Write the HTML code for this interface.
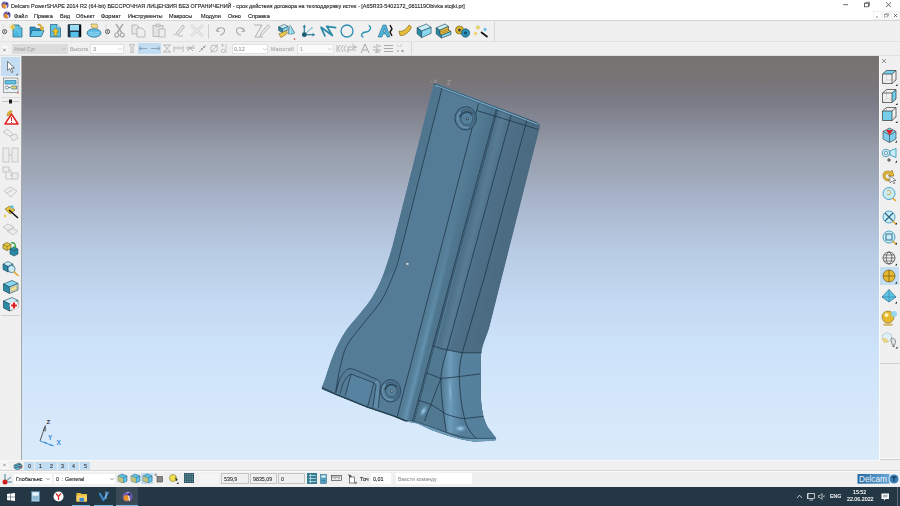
<!DOCTYPE html>
<html><head><meta charset="utf-8">
<style>
*{margin:0;padding:0;box-sizing:border-box}
html,body{width:900px;height:506px;overflow:hidden;background:#f0f0f0;font-family:"Liberation Sans",sans-serif;color:#000;position:relative}
.a{position:absolute}
.t{position:absolute;white-space:nowrap;line-height:1;-webkit-font-smoothing:antialiased;filter:grayscale(1);-webkit-text-stroke:0.12px currentColor}
#vp{background:linear-gradient(to bottom,#757270 0px,#767371 4px,#787576 24px,#7a7a86 44px,#878b97 69px,#979dab 94px,#9ea8b8 119px,#a8b4cb 144px,#b7cbe3 194px,#c4d9f1 244px,#cde3fa 294px,#d4e7fa 344px,#d9eafa 394px,#d9eafa 404px)}
</style></head><body>
<div class="a" style="left:0px;top:0px;width:900px;height:10px;background:#fff;"></div>
<svg class="a" style="left:1px;top:1px" width="8" height="8" viewBox="0 0 8 8"><circle cx="4" cy="4" r="3.6" fill="#6a5aa8"/><circle cx="3.3" cy="5" r="2.2" fill="#e8902a"/><path d="M4.5,0.8 L5.5,7.5" stroke="#fff" stroke-width="0.9"/><circle cx="5.2" cy="2.6" r="1.2" fill="#3b2f80"/></svg>
<div class="t" style="left:11px;top:3px;font-size:6.1px;color:#222;transform:scaleX(0.895);transform-origin:0 0;">Delcam PowerSHAPE 2014 R2 (64-bit) БЕССРОЧНАЯ ЛИЦЕНЗИЯ БЕЗ ОГРАНИЧЕНИЙ - срок действия договора на техподдержку истек - [A65R33-5402172_081119Obivka stojki.pr]</div>
<svg class="a" style="left:840px;top:0px" width="60" height="10" viewBox="0 0 60 10"><path d="M3,4.7 H8" stroke="#333" stroke-width="0.7"/><rect x="24.5" y="3.2" width="4" height="3.6" fill="none" stroke="#333" stroke-width="0.7"/><path d="M25.8,3.2 V2.3 H29.5 V5.7 H28.5" fill="none" stroke="#333" stroke-width="0.6"/><path d="M46,2.3 L51,7 M51,2.3 L46,7" stroke="#333" stroke-width="0.7"/></svg>
<div class="a" style="left:0px;top:10px;width:900px;height:10.5px;background:#fff;"></div>
<svg class="a" style="left:3px;top:11px" width="8" height="8" viewBox="0 0 8 8"><circle cx="4" cy="4" r="3.6" fill="#6a5aa8"/><circle cx="3.3" cy="5" r="2.2" fill="#e8902a"/><path d="M4.5,0.8 L5.5,7.5" stroke="#fff" stroke-width="0.9"/><circle cx="5.2" cy="2.6" r="1.2" fill="#3b2f80"/></svg>
<div class="t" style="left:14px;top:13.2px;font-size:6.1px;color:#1a1a1a;transform:scaleX(0.91);transform-origin:0 0;">Файл</div>
<div class="t" style="left:34px;top:13.2px;font-size:6.1px;color:#1a1a1a;transform:scaleX(0.91);transform-origin:0 0;">Правка</div>
<div class="t" style="left:60px;top:13.2px;font-size:6.1px;color:#1a1a1a;transform:scaleX(0.91);transform-origin:0 0;">Вид</div>
<div class="t" style="left:76px;top:13.2px;font-size:6.1px;color:#1a1a1a;transform:scaleX(0.91);transform-origin:0 0;">Объект</div>
<div class="t" style="left:101px;top:13.2px;font-size:6.1px;color:#1a1a1a;transform:scaleX(0.91);transform-origin:0 0;">Формат</div>
<div class="t" style="left:128px;top:13.2px;font-size:6.1px;color:#1a1a1a;transform:scaleX(0.91);transform-origin:0 0;">Инструменты</div>
<div class="t" style="left:169px;top:13.2px;font-size:6.1px;color:#1a1a1a;transform:scaleX(0.91);transform-origin:0 0;">Макросы</div>
<div class="t" style="left:201px;top:13.2px;font-size:6.1px;color:#1a1a1a;transform:scaleX(0.91);transform-origin:0 0;">Модули</div>
<div class="t" style="left:228px;top:13.2px;font-size:6.1px;color:#1a1a1a;transform:scaleX(0.91);transform-origin:0 0;">Окно</div>
<div class="t" style="left:248px;top:13.2px;font-size:6.1px;color:#1a1a1a;transform:scaleX(0.91);transform-origin:0 0;">Справка</div>
<svg class="a" style="left:873px;top:11px" width="27" height="9" viewBox="0 0 27 9"><rect x="0.5" y="0.5" width="7.5" height="8" fill="#fff" stroke="#e6e6e6" stroke-width="0.6"/><rect x="9.5" y="0.5" width="7.5" height="8" fill="#fff" stroke="#e6e6e6" stroke-width="0.6"/><rect x="18.5" y="0.5" width="8" height="8" fill="#fff" stroke="#e6e6e6" stroke-width="0.6"/><path d="M3,6 H5" stroke="#444" stroke-width="0.6"/><rect x="11.5" y="3.5" width="3" height="2.5" fill="none" stroke="#666" stroke-width="0.5"/><path d="M12.5,3.5 V2.5 H15.5 V5 H14.5" fill="none" stroke="#666" stroke-width="0.5"/><path d="M20.8,2.8 L24.2,6.2 M24.2,2.8 L20.8,6.2" stroke="#333" stroke-width="0.7"/></svg>
<div class="a" style="left:0px;top:20.3px;width:900px;height:1px;background:#d5d5d5;"></div>
<div class="a" style="left:0px;top:21.3px;width:900px;height:20px;background:#f0f0f0;"></div>
<div class="a" style="left:0px;top:41px;width:900px;height:0.8px;background:#e2e2e2;"></div>
<svg class="a" style="left:2px;top:23px" width="6" height="17" viewBox="0 0 6 17"><path d="M1,1 V16" stroke="#d4d4d4" stroke-width="0.7"/><circle cx="2.6" cy="8.6" r="2.1" fill="#e4e4e4" stroke="#555" stroke-width="0.9"/><path d="M3.2,7.6 L2,8.6 L3.2,9.6" stroke="#333" stroke-width="0.7" fill="none"/></svg>
<svg class="a" style="left:9px;top:23px" width="15" height="15" viewBox="0 0 15 15"><path d="M4,2 H10 L13,5 V14 H4 Z" fill="#5fc3e6" stroke="#1d5a7a" stroke-width="0.7"/><path d="M10,2 V5 H13" fill="#c9eefa" stroke="#1d5a7a" stroke-width="0.5"/><path d="M7,8 L10,11 V14 H4 Z" fill="#3aa9d6" opacity="0.5"/><circle cx="3.5" cy="4" r="2.2" fill="#f6e27a"/><path d="M3.5,0.5 V7.5 M0,4 H7 M1,1.5 L6,6.5 M6,1.5 L1,6.5" stroke="#d8b230" stroke-width="0.5"/></svg>
<svg class="a" style="left:29px;top:23px" width="16" height="15" viewBox="0 0 16 15"><path d="M1,4 H6 L7,5.5 H12 V13 H1 Z" fill="#2d8fc0" stroke="#144e70" stroke-width="0.6"/><path d="M3,7.5 H15 L12.5,13.5 H1 Z" fill="#66c6ea" stroke="#144e70" stroke-width="0.6"/><path d="M9,1 C12,1 13.5,3 13.5,5 L15,4.5 L13,8 L10.5,5.5 L12,5.2 C12,3.5 11,2.2 9,2.2 Z" fill="#f0c030" stroke="#9a7010" stroke-width="0.4"/></svg>
<svg class="a" style="left:49px;top:23px" width="13" height="15" viewBox="0 0 13 15"><path d="M1.5,1.5 H8 L11.5,5 V14 H1.5 Z" fill="#5fc3e6" stroke="#1d5a7a" stroke-width="0.7"/><path d="M8,1.5 V5 H11.5" fill="#c9eefa" stroke="#1d5a7a" stroke-width="0.5"/><path d="M6.5,5 L10,9 H8 V12.5 H5 V9 H3 Z" fill="#f3c52b" stroke="#8a6a10" stroke-width="0.5"/></svg>
<svg class="a" style="left:67px;top:23px" width="15" height="15" viewBox="0 0 15 15"><rect x="1" y="1.5" width="13" height="12.5" rx="0.5" fill="#1e3a50" stroke="#0d1a24" stroke-width="0.5"/><rect x="3" y="2" width="9" height="5.5" fill="#9adcf4"/><rect x="3.5" y="9" width="8" height="5" fill="#55c0e8"/><rect x="12.5" y="2" width="1.3" height="12" fill="#000"/></svg>
<svg class="a" style="left:86px;top:23px" width="16" height="15" viewBox="0 0 16 15"><path d="M5,1 H11 L12,5 H6 Z" fill="#f3dc8c" stroke="#8a7530" stroke-width="0.5"/><ellipse cx="8" cy="10" rx="7" ry="4.2" fill="#5fbde6" stroke="#1d5a7a" stroke-width="0.6"/><path d="M2.5,9 C5,10.5 11,10.5 13.5,9 M3,11.5 C6,12.5 10,12.5 13,11.5" stroke="#bfe8f8" stroke-width="0.6" fill="none"/></svg>
<svg class="a" style="left:105px;top:23px" width="6" height="17" viewBox="0 0 6 17"><path d="M1,1 V16" stroke="#d4d4d4" stroke-width="0.7"/><circle cx="2.6" cy="8.6" r="2.1" fill="#e4e4e4" stroke="#555" stroke-width="0.9"/><path d="M3.2,7.6 L2,8.6 L3.2,9.6" stroke="#333" stroke-width="0.7" fill="none"/></svg>
<svg class="a" style="left:114px;top:23px" width="11" height="15" viewBox="0 0 11 15"><path d="M2,1 L8,10 M9,1 L3,10" stroke="#a8a8a8" stroke-width="1.4"/><circle cx="2.8" cy="12" r="2" fill="none" stroke="#a8a8a8" stroke-width="1.2"/><circle cx="8.2" cy="12" r="2" fill="none" stroke="#a8a8a8" stroke-width="1.2"/></svg>
<svg class="a" style="left:131px;top:23px" width="16" height="15" viewBox="0 0 16 15"><path d="M1,2 H6 L8,4 V11 H1 Z" fill="#e6e6e6" stroke="#a8a8a8" stroke-width="0.7"/><path d="M6,5 H11 L14,8 V14 H6 Z" fill="#eee" stroke="#a8a8a8" stroke-width="0.7"/></svg>
<svg class="a" style="left:152px;top:23px" width="14" height="15" viewBox="0 0 14 15"><rect x="1" y="2.5" width="10" height="11" fill="#e3e3e3" stroke="#a8a8a8" stroke-width="0.7"/><rect x="4" y="1" width="4" height="2.5" fill="#ddd" stroke="#a8a8a8" stroke-width="0.6"/><rect x="7" y="6" width="6" height="8" fill="#eee" stroke="#a8a8a8" stroke-width="0.7"/></svg>
<svg class="a" style="left:172px;top:23px" width="13" height="15" viewBox="0 0 13 15"><path d="M11,2 L4,10 L6,12 L12.5,4 Z" fill="#e6e6e6" stroke="#a8a8a8" stroke-width="0.7"/><path d="M1,12 C3,9 5,13 4,13 M6,13 H11" stroke="#a8a8a8" stroke-width="0.7" fill="none"/></svg>
<svg class="a" style="left:189px;top:23px" width="16" height="15" viewBox="0 0 16 15"><path d="M2,2 C6,5 10,10 14,13 M14,2 C10,5 6,10 2,13" stroke="#d0d0d0" stroke-width="2.6" fill="none"/><path d="M2,2 C6,5 10,10 14,13 M14,2 C10,5 6,10 2,13" stroke="#eee" stroke-width="1.2" fill="none"/></svg>
<div class="a" style="left:208px;top:24px;width:0.8px;height:15px;background:#cfcfcf;"></div>
<svg class="a" style="left:215px;top:25px" width="12" height="11" viewBox="0 0 12 11"><path d="M3,3 L1.5,6 L4.5,6.5 M2,5.5 C3,2 9,2 9.5,5 C10,8 7,10 5,10" stroke="#a8a8a8" stroke-width="1.1" fill="none"/></svg>
<svg class="a" style="left:233px;top:25px" width="13" height="11" viewBox="0 0 13 11"><path d="M10,3 L11.5,6 L8.5,6.5 M11,5.5 C10,2 4,2 3.5,5 C3,8 6,10 8,10" stroke="#a8a8a8" stroke-width="1.1" fill="none"/></svg>
<svg class="a" style="left:253px;top:23px" width="18" height="15" viewBox="0 0 18 15"><path d="M1,2 H9 L2,14 H10" stroke="#a8a8a8" stroke-width="0.9" fill="none"/><path d="M15,1.5 L17,3.5 L9,12 L7,13 L7.5,10.5 Z" fill="#e8e8e8" stroke="#a8a8a8" stroke-width="0.7"/></svg>
<svg class="a" style="left:277px;top:23px" width="19" height="17" viewBox="0 0 19 17"><path d="M1.6,3.9 L7.3,1.4 L11.2,3.4 L5.6,5.8 Z" fill="#c8ecf8" stroke="#123a4a" stroke-width="0.5"/><path d="M1.6,3.9 L5.6,5.8 V9.5 L1.6,7.5 Z" fill="#2a8aa8" stroke="#123a4a" stroke-width="0.5"/><path d="M5.6,5.8 L11.2,3.4 V7 L5.6,9.5 Z" fill="#8ad8f0" stroke="#123a4a" stroke-width="0.5"/><path d="M13.1,1.9 L17.6,9.9 C17,11 12,11.5 11.1,10.6 Z" fill="#8ad8f0" stroke="#123a4a" stroke-width="0.5"/><path d="M13.1,1.9 L13.5,10.9" stroke="#c8ecf8" stroke-width="0.8"/><path d="M1.9,10.7 C5,10 7.5,8.5 9.2,7.3 L10.2,10.2 C8.5,12 6,13.5 3.8,14.6 Z" fill="#e8c850" stroke="#6a5010" stroke-width="0.5"/><circle cx="17.5" cy="16" r="0.8" fill="#e02020"/></svg>
<svg class="a" style="left:301px;top:23px" width="15" height="15" viewBox="0 0 15 15"><path d="M3.3,11.7 V3.5" stroke="#2a7d9a" stroke-width="1.2"/><path d="M1.6,4.2 L3.3,1.4 L5,4.2 Z" fill="#2a7d9a"/><path d="M3.3,11.7 H12" stroke="#2a7d9a" stroke-width="1.2"/><path d="M11.5,10 L14.2,11.7 L11.5,13.4 Z" fill="#2a7d9a"/><path d="M3.3,11.7 L10.5,5.2" stroke="#5aaac4" stroke-width="1"/><circle cx="10.9" cy="4.9" r="1" fill="#8ac8dc"/><circle cx="3.3" cy="11.7" r="2.4" fill="#1a5a72"/></svg>
<svg class="a" style="left:319px;top:24px" width="18" height="14" viewBox="0 0 18 14"><path d="M5.9,11.9 L2,3.3 L13.4,11.5 L7.7,2.3 L16.6,3.7" stroke="#2a8aa8" stroke-width="1.7" fill="none" stroke-linejoin="round" stroke-linecap="round"/></svg>
<svg class="a" style="left:339px;top:23px" width="16" height="16" viewBox="0 0 16 16"><circle cx="8" cy="8" r="6" fill="none" stroke="#2d90b3" stroke-width="1.3"/></svg>
<svg class="a" style="left:360px;top:24px" width="12" height="14" viewBox="0 0 12 14"><path d="M9,1.5 C12,3 10,8 6,8 C2,8 0,12 3,13" stroke="#2d90b3" stroke-width="1.3" fill="none" stroke-linecap="round"/></svg>
<svg class="a" style="left:377px;top:23px" width="17" height="15" viewBox="0 0 17 15"><path d="M1,14 L6,2 H9 L13,14 H10 L9,11 H6 L5,14 Z M6.5,9 H8.5 L7.5,5.5 Z" fill="#4fb3da" stroke="#1d5a7a" stroke-width="0.5"/><path d="M13,2 L15,6 L13,9 L15,13" stroke="#111" stroke-width="1.4" fill="none"/></svg>
<svg class="a" style="left:398px;top:24px" width="14" height="13" viewBox="0 0 14 13"><path d="M1,7 C4,8 8,6 11,1 L13.5,3 C11,9 6,12 2,11.5 Z" fill="#e6bd3a" stroke="#7a5a10" stroke-width="0.6"/></svg>
<svg class="a" style="left:416px;top:23px" width="16" height="16" viewBox="0 0 16 16"><path d="M1.1,4.8 L10.4,1 L15.1,4.3 L5.6,8.1 Z" fill="#c8ecf8" stroke="#123a4a" stroke-width="0.6" stroke-linejoin="round"/><path d="M1.1,4.8 L5.6,8.1 V14.6 L1.1,10.8 Z" fill="#2a8aa8" stroke="#123a4a" stroke-width="0.6" stroke-linejoin="round"/><path d="M5.6,8.1 L15.1,4.3 V10.3 L5.6,14.6 Z" fill="#8ad8f0" stroke="#123a4a" stroke-width="0.6" stroke-linejoin="round"/></svg>
<svg class="a" style="left:435px;top:23px" width="17" height="16" viewBox="0 0 17 16"><path d="M1.2,4.8 L10,1 L13.5,3.5 L4.7,7.3 Z" fill="#c8ecf8" stroke="#123a4a" stroke-width="0.6" stroke-linejoin="round"/><path d="M4.7,7.3 L13.5,3.5 L13.5,7 L16,8.5 L6.5,12.3 L4.7,11 Z" fill="#e8c048" stroke="#123a4a" stroke-width="0.6" stroke-linejoin="round"/><path d="M5.5,9 L14,5.5 M5.5,10.8 L14.5,7.2" stroke="#8a6a10" stroke-width="0.6"/><path d="M1.2,4.8 L4.7,7.3 L4.7,11 L6.5,12.3 V15 L1.2,11 Z" fill="#2a8aa8" stroke="#123a4a" stroke-width="0.6" stroke-linejoin="round"/><path d="M6.5,12.3 L16,8.5 V11.5 L6.5,15 Z" fill="#8ad8f0" stroke="#123a4a" stroke-width="0.6" stroke-linejoin="round"/></svg>
<svg class="a" style="left:454px;top:24px" width="17" height="14" viewBox="0 0 17 14"><circle cx="5.5" cy="6" r="4" fill="#e0b830" stroke="#5a4a10" stroke-width="0.6"/><circle cx="5.5" cy="6" r="1.5" fill="#444"/><circle cx="11.5" cy="9" r="4.2" fill="#2d90b3" stroke="#12475f" stroke-width="0.6"/><circle cx="11.5" cy="9" r="1.4" fill="#12475f"/></svg>
<svg class="a" style="left:473px;top:24px" width="16" height="14" viewBox="0 0 16 14"><path d="M5,1.5 L7,3.5 L5,5.5 L3,3.5 Z" fill="#f0d850" stroke="#b0a030" stroke-width="0.4"/><path d="M12,3.5 L14,5.5 L12,7.5 L10,5.5 Z" fill="#5fc0e0"/><path d="M2.5,7.5 L4.5,9.5 L2.5,11.5 L0.5,9.5 Z" fill="#f0d060"/><path d="M8,8 L14.5,13" stroke="#111" stroke-width="1.6"/></svg>
<div class="a" style="left:494px;top:21.3px;width:0.8px;height:20px;background:#d8d8d8;"></div>
<div class="a" style="left:1.5px;top:46px;width:6px;height:7px;background:#fafafa;"></div>
<svg class="a" style="left:2px;top:46.5px" width="5" height="5.5" viewBox="0 0 5 5.5"><path d="M1,1.5 L4,4.5 M4,1.5 L1,4.5" stroke="#555" stroke-width="0.6"/></svg>
<div class="a" style="left:12px;top:43.7px;width:56px;height:10.3px;background:#dcdcdc;"></div>
<div class="t" style="left:14px;top:45.9px;font-size:6.05px;color:#a8a8a8;transform:scaleX(0.91);transform-origin:0 0;">Arial Cyr</div>
<svg class="a" style="left:61px;top:46px" width="6" height="6" viewBox="0 0 6 6"><path d="M1,2 L3,4 L5,2" stroke="#aaa" stroke-width="0.5" fill="none"/></svg>
<div class="t" style="left:70px;top:46.800000000000004px;font-size:5.83px;color:#aaa;transform:scaleX(0.91);transform-origin:0 0;">Высота</div>
<div class="a" style="left:90px;top:43.7px;width:34px;height:10.3px;background:#fff;border:0.5px solid #e0e0e0"></div>
<div class="t" style="left:92.5px;top:45.9px;font-size:6.05px;color:#999;transform:scaleX(0.91);transform-origin:0 0;">3</div>
<svg class="a" style="left:117px;top:46px" width="6" height="6" viewBox="0 0 6 6"><path d="M1,2 L3,4 L5,2" stroke="#aaa" stroke-width="0.5" fill="none"/></svg>
<svg class="a" style="left:128px;top:43px" width="8" height="11" viewBox="0 0 8 11"><path d="M1.5,1.5 H6.5 L5,5 L5.5,9.5 H2.5 L3.5,5 Z" fill="#e6e6e6" stroke="#a8a8a8" stroke-width="0.6"/></svg>
<div class="a" style="left:138px;top:43px;width:22.7px;height:11.4px;background:#c2dcf2;"></div>
<svg class="a" style="left:138px;top:43px" width="23" height="11" viewBox="0 0 23 11"><path d="M2,5.5 H9 M2,3.5 V7.5 M3,4.5 L2,5.5 L3,6.5" stroke="#6a86a0" stroke-width="0.6" fill="none"/><path d="M13,5.5 H21 M21,3.5 V7.5 M20,4.5 L21,5.5 L20,6.5" stroke="#6a86a0" stroke-width="0.6" fill="none"/></svg>
<svg class="a" style="left:162px;top:43px" width="10" height="11" viewBox="0 0 10 11"><path d="M2,2 L8,9 M8,2 L2,9 M1,2 H9 M1,9 H9" stroke="#a8a8a8" stroke-width="0.7"/></svg>
<svg class="a" style="left:173px;top:43px" width="11" height="11" viewBox="0 0 11 11"><path d="M1,3 V9 M10,3 V9 M1,5 H10" stroke="#a8a8a8" stroke-width="0.7"/><circle cx="5.5" cy="5" r="1.2" fill="#f0f0f0" stroke="#a8a8a8" stroke-width="0.5"/></svg>
<svg class="a" style="left:185px;top:43px" width="11" height="11" viewBox="0 0 11 11"><path d="M2,8 L9,2 M3,3 L8,8 M1,5 H10" stroke="#a8a8a8" stroke-width="0.9"/></svg>
<svg class="a" style="left:197px;top:43px" width="11" height="11" viewBox="0 0 11 11"><path d="M2,9 L9,2 M4,5 L6,7 M6,3 L8,5" stroke="#a8a8a8" stroke-width="1"/></svg>
<svg class="a" style="left:209px;top:43px" width="10" height="11" viewBox="0 0 10 11"><circle cx="5" cy="5.5" r="3.5" fill="none" stroke="#a8a8a8" stroke-width="0.7"/><path d="M1.5,10 L9,1" stroke="#a8a8a8" stroke-width="0.7"/></svg>
<svg class="a" style="left:220px;top:43px" width="7" height="11" viewBox="0 0 7 11"><circle cx="3" cy="8" r="1.8" fill="none" stroke="#a8a8a8" stroke-width="0.6"/><path d="M1,2 H4 M2.5,1 V4 M6,1 V10" stroke="#a8a8a8" stroke-width="0.6"/></svg>
<div class="a" style="left:231.6px;top:43.7px;width:36px;height:10.3px;background:#fff;border:0.5px solid #e0e0e0"></div>
<div class="t" style="left:234px;top:45.9px;font-size:6.05px;color:#999;transform:scaleX(0.91);transform-origin:0 0;">0,12</div>
<svg class="a" style="left:261.5px;top:46px" width="6" height="6" viewBox="0 0 6 6"><path d="M1,2 L3,4 L5,2" stroke="#aaa" stroke-width="0.5" fill="none"/></svg>
<div class="t" style="left:270.7px;top:46.800000000000004px;font-size:5.83px;color:#aaa;transform:scaleX(0.91);transform-origin:0 0;">Масштаб</div>
<div class="a" style="left:297px;top:43.7px;width:36.5px;height:10.3px;background:#fafafa;border:0.5px solid #e6e6e6"></div>
<div class="t" style="left:299.5px;top:45.9px;font-size:6.05px;color:#aaa;transform:scaleX(0.91);transform-origin:0 0;">1</div>
<svg class="a" style="left:327px;top:46px" width="6" height="6" viewBox="0 0 6 6"><path d="M1,2 L3,4 L5,2" stroke="#aaa" stroke-width="0.5" fill="none"/></svg>
<svg class="a" style="left:335.5px;top:43px" width="11" height="11" viewBox="0 0 11 11"><path d="M1,2 V9 M4,2 L2,5.5 L4,9 M7,2 L5,5.5 L7,9 M10,2 L8,5.5 L10,9" stroke="#a8a8a8" stroke-width="0.8" fill="none"/></svg>
<svg class="a" style="left:347px;top:43px" width="11" height="11" viewBox="0 0 11 11"><path d="M1,10 V4 H10 M5,1 L9,4 L5,6 M1,7 H9" stroke="#a8a8a8" stroke-width="0.8" fill="none"/></svg>
<svg class="a" style="left:359.5px;top:43px" width="10" height="11" viewBox="0 0 10 11"><path d="M1,10 L5,1 L9,10 M3,7 H7" stroke="#a8a8a8" stroke-width="1" fill="none"/></svg>
<svg class="a" style="left:371.5px;top:43px" width="10" height="11" viewBox="0 0 10 11"><path d="M1,4 H4 M6,3 H9 M1,7 H9 M3,9 H8 M5,1 V10" stroke="#a8a8a8" stroke-width="0.9" fill="none"/></svg>
<svg class="a" style="left:383px;top:43px" width="11" height="11" viewBox="0 0 11 11"><path d="M1,2.5 H10 M1,5.5 H10 M1,8.5 H10" stroke="#a8a8a8" stroke-width="1.2"/></svg>
<svg class="a" style="left:395px;top:43px" width="10" height="11" viewBox="0 0 10 11"><path d="M2,2 L4,4 M7,1 L5,4 M2,7 L4,9 M4,7 L2,9" stroke="#a8a8a8" stroke-width="0.6"/><circle cx="7.5" cy="8" r="1.3" fill="#a8a8a8"/></svg>
<div class="a" style="left:411px;top:42px;width:0.8px;height:13px;background:#d8d8d8;"></div>
<div class="a" style="left:0px;top:55.2px;width:900px;height:0.8px;background:#e0e0e0;"></div>
<div class="a" id="vp" style="left:21px;top:56px;width:858px;height:403.5px"></div>
<svg class="a" style="left:36px;top:414px" width="30" height="36" viewBox="0 0 30 36"><path d="M4,27 L8.8,13" stroke="#333" stroke-width="0.8"/><path d="M7.3,16.5 L9.3,11.5 L9.8,17 Z" fill="none" stroke="#333" stroke-width="0.6"/><path d="M4,27 L18,32" stroke="#3a90dc" stroke-width="0.9"/><path d="M8,28 L11,29.5 M13,30.5 L16,31.5" stroke="#3a90dc" stroke-width="1.2"/><text x="10.5" y="9.5" font-size="6.2" font-family="Liberation Sans" font-weight="bold" fill="#333">Z</text><text x="12" y="25.5" font-size="6.3" font-family="Liberation Sans" font-weight="bold" fill="#3a8ad8">Y</text><text x="20.5" y="31" font-size="6.5" font-family="Liberation Sans" font-weight="bold" fill="#3a8ad8">X</text></svg>
<div class="a" style="left:0px;top:56px;width:21px;height:403.5px;background:#f0f0f0;"></div>
<div class="a" style="left:20.6px;top:56px;width:0.8px;height:403.5px;background:#a8a8a8;"></div>
<div class="a" style="left:1px;top:57.2px;width:19px;height:18.6px;background:#c4ddf3;"></div>
<svg class="a" style="left:6px;top:60px" width="12" height="16" viewBox="0 0 12 16"><path d="M1.5,1.5 V10.5 L3.8,8.5 L5.5,12.5 L7,11.8 L5.3,8 H8.5 Z" fill="#fff" stroke="#333" stroke-width="0.6"/><path d="M11.5,13.8 L11.5,15.2 L10,15.2 Z" fill="#111"/></svg>
<svg class="a" style="left:3px;top:77px" width="17" height="17" viewBox="0 0 17 17"><rect x="0.5" y="1" width="14.5" height="14.5" fill="#e8f2f6" stroke="#555" stroke-width="0.5"/><path d="M2,3.5 H13 V7 H2 Z" fill="#5fc3e6" stroke="#1d5a7a" stroke-width="0.5"/><path d="M3,10.5 H7 M7.5,10.5 L9,9 H13.5 V12 H9 Z" stroke="#1d5a7a" stroke-width="0.6" fill="#e8d070"/><circle cx="4" cy="10.5" r="1.5" fill="#fff" stroke="#333" stroke-width="0.5"/><path d="M15.5,14.8 L15.5,16.5 L13.8,16.5 Z" fill="#e03030"/></svg>
<div class="a" style="left:1px;top:96.5px;width:19px;height:0.7px;background:#dcdcdc;"></div>
<svg class="a" style="left:1px;top:99px" width="19" height="5" viewBox="0 0 19 5"><path d="M1,2.5 H18" stroke="#999" stroke-width="0.5"/><rect x="8" y="0.5" width="3" height="4" fill="#222"/></svg>
<svg class="a" style="left:4px;top:109px" width="15" height="16" viewBox="0 0 15 16"><path d="M7.5,5 L14,15 H1 Z" fill="#fff" stroke="#e02424" stroke-width="1.5" stroke-linejoin="round"/><path d="M7.5,8 V12 M7.5,13 V14" stroke="#d02020" stroke-width="1"/><path d="M3,7 C3,3 6,1 8,2 L6,6 Z" fill="#e8b030" stroke="#8a6010" stroke-width="0.4"/></svg>
<svg class="a" style="left:2px;top:128px" width="17" height="14" viewBox="0 0 17 14"><path d="M1,4 L5,1 L11,6 L9,9 Z" fill="#ececec" stroke="#b8b8b8" stroke-width="0.7"/><path d="M8,8 L14,6 L16,10 L11,13 Z" fill="#ececec" stroke="#b8b8b8" stroke-width="0.7"/></svg>
<svg class="a" style="left:2px;top:147px" width="17" height="16" viewBox="0 0 17 16"><rect x="1" y="1" width="6" height="14" fill="#ececec" stroke="#b8b8b8" stroke-width="0.7"/><rect x="10" y="1" width="6" height="14" fill="#ececec" stroke="#b8b8b8" stroke-width="0.7"/><path d="M7,8 H10" stroke="#b8b8b8" stroke-width="0.7"/></svg>
<svg class="a" style="left:2px;top:166px" width="17" height="14" viewBox="0 0 17 14"><rect x="1" y="1" width="6" height="5" fill="#ececec" stroke="#b8b8b8" stroke-width="0.7"/><rect x="10" y="7" width="6" height="6" fill="#ececec" stroke="#b8b8b8" stroke-width="0.7"/><path d="M7,4 H9 V10 H10 M4,6 V13 H10" stroke="#b8b8b8" stroke-width="0.7" fill="none"/></svg>
<svg class="a" style="left:2px;top:185px" width="17" height="14" viewBox="0 0 17 14"><path d="M2,6 L8,2 L15,6 L9,12 Z" fill="#ececec" stroke="#b8b8b8" stroke-width="0.7"/><path d="M5,8 L10,5" stroke="#b8b8b8" stroke-width="0.7"/></svg>
<svg class="a" style="left:3px;top:203px" width="16" height="16" viewBox="0 0 16 16"><path d="M2,6 L7,3 L12,7 L7,11 Z" fill="#e8c040" stroke="#7a5a10" stroke-width="0.6"/><path d="M6,7 L15,15" stroke="#111" stroke-width="1.5"/><path d="M9,2 L11,4 L9,6 L7,4 Z" fill="#5fc0e0"/><path d="M2,11 L4,13 L2,15 L0.5,13 Z" fill="#f0d060"/></svg>
<svg class="a" style="left:2px;top:222px" width="17" height="14" viewBox="0 0 17 14"><path d="M1,5 L6,2 L12,5 L7,9 Z M5,9 L10,6 L16,9 L11,13 Z" fill="#ececec" stroke="#b8b8b8" stroke-width="0.7"/></svg>
<svg class="a" style="left:2px;top:240px" width="18" height="17" viewBox="0 0 18 17"><path d="M1,4.5 L5,2.5 L9,4.5 V8.5 L5,10.5 L1,8.5 Z" fill="#e6c540" stroke="#3a3a10" stroke-width="0.5"/><path d="M1,4.5 L5,6.5 L9,4.5 M5,6.5 V10.5" stroke="#3a3a10" stroke-width="0.4" fill="none"/><path d="M8,9 L12,7 L16,9 V14 L12,16 L8,14 Z" fill="#2a8aa8" stroke="#123a4a" stroke-width="0.5"/><path d="M8,9 L12,11 L16,9" stroke="#123a4a" stroke-width="0.4" fill="none"/><path d="M9,3 C12,2 14,4 13,7.5" stroke="#30a040" stroke-width="1.3" fill="none"/><path d="M11.5,6.5 L13,9 L14.8,6.8 Z" fill="#30a040"/></svg>
<svg class="a" style="left:2px;top:260px" width="18" height="17" viewBox="0 0 18 17"><path d="M1,4 L6,1.5 L11,4 L6,6.5 Z" fill="#c8ecf8" stroke="#123a4a" stroke-width="0.5"/><path d="M1,4 L6,6.5 V12 L1,9.5 Z" fill="#2a8aa8" stroke="#123a4a" stroke-width="0.5"/><path d="M6,6.5 L11,4 V9.5 L6,12 Z" fill="#8ad8f0" stroke="#123a4a" stroke-width="0.5"/><circle cx="9.5" cy="9" r="3.6" fill="#d8f2fa" fill-opacity="0.8" stroke="#2a6a8a" stroke-width="0.8"/><path d="M12,11.8 L16,15.5" stroke="#e0a830" stroke-width="1.7" stroke-linecap="round"/></svg>
<svg class="a" style="left:2px;top:279px" width="18" height="16" viewBox="0 0 18 16"><path d="M1.5,5 L10,1.5 L16,4.5 L7.5,8 Z" fill="#8ad8f0" stroke="#123a4a" stroke-width="0.6"/><path d="M1.5,5 L7.5,8 V14.5 L1.5,11.5 Z" fill="#2a8aa8" stroke="#123a4a" stroke-width="0.6"/><path d="M7.5,8 L16,4.5 V11 L7.5,14.5 Z" fill="#c8ecf8" stroke="#123a4a" stroke-width="0.6"/><path d="M9,9 L14.5,6.8 V10.5 L9,12.8 Z" fill="#f0e0a0" stroke="#c0a030" stroke-width="0.5"/></svg>
<svg class="a" style="left:2px;top:296px" width="18" height="17" viewBox="0 0 18 17"><path d="M1.5,5 L10,1.5 L16,4.5 L7.5,8 Z" fill="#c8ecf8" stroke="#123a4a" stroke-width="0.6"/><path d="M1.5,5 L7.5,8 V15 L1.5,12 Z" fill="#2a8aa8" stroke="#123a4a" stroke-width="0.6"/><path d="M7.5,8 L16,4.5 V11.5 L7.5,15 Z" fill="#e8f6fa" stroke="#123a4a" stroke-width="0.6"/><circle cx="12" cy="9.5" r="4.3" fill="#fff" stroke="#ccc" stroke-width="0.4"/><path d="M12,6.6 V12.4 M9.1,9.5 H14.9" stroke="#e02020" stroke-width="2.2"/></svg>
<div class="a" style="left:1px;top:315.3px;width:19px;height:0.7px;background:#d0d0d0;"></div>
<div class="a" style="left:879px;top:56px;width:21px;height:403.5px;background:#f0f0f0;"></div>
<div class="a" style="left:879px;top:56px;width:0.8px;height:403.5px;background:#fbfbfb;"></div>
<div class="a" style="left:880px;top:362.8px;width:20px;height:0.8px;background:#cfcfcf;"></div>
<svg class="a" style="left:881px;top:58px" width="6" height="6" viewBox="0 0 6 6"><path d="M1,1 L5,5 M5,1 L1,5" stroke="#555" stroke-width="0.6"/></svg>
<svg class="a" style="left:881px;top:68.5px" width="17" height="17" viewBox="0 0 17 17"><path d="M1.5,5 L5.5,1.5 H15 L11,5 Z" fill="#6cd0ee"/><path d="M5.5,1.5 V11 H15 M5.5,11 L1.5,14.5" stroke="#bbb" stroke-width="0.5" fill="none"/><path d="M1.5,5 L5.5,1.5 H15 V11 L11,14.5 H1.5 Z M1.5,5 H11 V14.5 M11,5 L15,1.5" stroke="#333" stroke-width="0.7" fill="none" stroke-linejoin="round"/><path d="M16.5,15 V17 H14.5 Z" fill="#111"/></svg>
<svg class="a" style="left:881px;top:87.5px" width="17" height="17" viewBox="0 0 17 17"><path d="M11,5 L15,1.5 V11 L11,14.5 Z" fill="#6cd0ee"/><path d="M5.5,1.5 V11 H15 M5.5,11 L1.5,14.5" stroke="#bbb" stroke-width="0.5" fill="none"/><path d="M1.5,5 L5.5,1.5 H15 V11 L11,14.5 H1.5 Z M1.5,5 H11 V14.5 M11,5 L15,1.5" stroke="#333" stroke-width="0.7" fill="none" stroke-linejoin="round"/><path d="M16.5,15 V17 H14.5 Z" fill="#111"/></svg>
<svg class="a" style="left:881px;top:105.5px" width="17" height="17" viewBox="0 0 17 17"><rect x="1.5" y="5" width="9.5" height="9.5" fill="#6cd0ee"/><path d="M5.5,1.5 V11 H15 M5.5,11 L1.5,14.5" stroke="#bbb" stroke-width="0.5" fill="none"/><path d="M1.5,5 L5.5,1.5 H15 V11 L11,14.5 H1.5 Z M1.5,5 H11 V14.5 M11,5 L15,1.5" stroke="#333" stroke-width="0.7" fill="none" stroke-linejoin="round"/><path d="M16.5,15 V17 H14.5 Z" fill="#111"/></svg>
<svg class="a" style="left:881px;top:127px" width="17" height="17" viewBox="0 0 17 17"><path d="M8.5,1 L15,4.5 V12 L8.5,15.5 L2,12 V4.5 Z" fill="#7fd0ee" stroke="#333" stroke-width="0.6"/><path d="M2,4.5 L8.5,8 L15,4.5 M8.5,8 V15.5" stroke="#333" stroke-width="0.6" fill="none"/><path d="M5,3 L8.5,8 L12,3 Z" fill="#e02020"/><path d="M16,13.5 V15.5 H14 Z" fill="#111"/></svg>
<svg class="a" style="left:881px;top:147px" width="17" height="16" viewBox="0 0 17 16"><circle cx="5" cy="6" r="3.8" fill="none" stroke="#2d90b3" stroke-width="0.8"/><circle cx="5" cy="6" r="1.8" fill="none" stroke="#2d90b3" stroke-width="0.8"/><path d="M9,4 L15,1.5 V10.5 L9,8 Z" fill="#c8ecf8" stroke="#2d90b3" stroke-width="0.8"/><path d="M8,11 V15 M6,13 H10" stroke="#222" stroke-width="0.8"/><path d="M16,13.5 V15.5 H14 Z" fill="#111"/></svg>
<svg class="a" style="left:881px;top:168px" width="17" height="16" viewBox="0 0 17 16"><path d="M2,7 C2,3 7,2 10,4 L11,2 L13,8 L7,8 L9,6 C7,5 4,6 4,8 C4,10 6,11 8,11 L8,13 C4,13 2,11 2,7 Z" fill="#e6b830" stroke="#7a5a10" stroke-width="0.5"/><path d="M9,8 V15 L11,13 L13,16 L14,15 L12,12.5 H15 Z" fill="#fff" stroke="#333" stroke-width="0.5"/></svg>
<svg class="a" style="left:881px;top:186px" width="17" height="16" viewBox="0 0 17 16"><circle cx="8" cy="7.5" r="6" fill="#c8ecf8" stroke="#2d90b3" stroke-width="0.8"/><path d="M6,5 C8,3.5 10.5,5 9.5,7.5 C9,9 7,9 6,8" stroke="#e0a020" stroke-width="1" fill="none"/><path d="M11.5,12 L15,15" stroke="#e0a020" stroke-width="1.5"/></svg>
<svg class="a" style="left:881px;top:209px" width="17" height="16" viewBox="0 0 17 16"><circle cx="8" cy="8" r="6" fill="#c8ecf8" stroke="#2d90b3" stroke-width="0.8"/><path d="M4,4 L12,12 M12,4 L4,12" stroke="#2d6080" stroke-width="1.1"/><path d="M11.5,12 L15,15" stroke="#e0a020" stroke-width="1.5"/><path d="M16,13.5 V15.5 H14 Z" fill="#111"/></svg>
<svg class="a" style="left:881px;top:229px" width="17" height="16" viewBox="0 0 17 16"><circle cx="8" cy="8" r="6" fill="#c8ecf8" stroke="#2d90b3" stroke-width="0.8"/><rect x="5" y="5" width="6" height="6" fill="none" stroke="#2d6080" stroke-width="0.9"/><path d="M11.5,12 L15,15" stroke="#e0a020" stroke-width="1.5"/><path d="M16,13.5 V15.5 H14 Z" fill="#111"/></svg>
<svg class="a" style="left:881px;top:250px" width="17" height="16" viewBox="0 0 17 16"><circle cx="8" cy="8" r="6" fill="none" stroke="#333" stroke-width="0.7"/><ellipse cx="8" cy="8" rx="2.8" ry="6" fill="none" stroke="#333" stroke-width="0.6"/><path d="M2,8 H14 M3,5 H13 M3,11 H13" stroke="#333" stroke-width="0.6"/><path d="M16,13.5 V15.5 H14 Z" fill="#111"/></svg>
<div class="a" style="left:880px;top:267px;width:19px;height:18px;background:#c4ddf3;"></div>
<svg class="a" style="left:881px;top:268px" width="17" height="16" viewBox="0 0 17 16"><circle cx="8" cy="8" r="6" fill="#e6b830" stroke="#5a4a10" stroke-width="0.6"/><path d="M2,8 H14 M8,2 V14" stroke="#5a4a10" stroke-width="0.6"/><path d="M16,13.5 V15.5 H14 Z" fill="#111"/></svg>
<svg class="a" style="left:881px;top:288px" width="17" height="16" viewBox="0 0 17 16"><path d="M8,1.5 L15,9 L8,14 L1,9 Z" fill="#5fc3e6" stroke="#1d5a7a" stroke-width="0.6"/><path d="M8,1.5 L8,14 M1,9 L15,9" stroke="#1d5a7a" stroke-width="0.4"/><path d="M16,13.5 V15.5 H14 Z" fill="#111"/></svg>
<svg class="a" style="left:881px;top:309px" width="17" height="18" viewBox="0 0 17 18"><circle cx="7" cy="8" r="6" fill="#e6b830" stroke="#6a5a10" stroke-width="0.5"/><circle cx="5.5" cy="6" r="2" fill="#fff4b0"/><circle cx="13" cy="5" r="3" fill="#8fd5ef" opacity="0.9"/><ellipse cx="7" cy="15.5" rx="5" ry="1.5" fill="#c0a030" opacity="0.6"/></svg>
<svg class="a" style="left:881px;top:331px" width="17" height="18" viewBox="0 0 17 18"><path d="M1.5,4 L6,1.5 L10.5,4 V9 L6,11.5 L1.5,9 Z" fill="#dff2f8" stroke="#9ab" stroke-width="0.5"/><path d="M1,8 C3,6 7,7 8,11 L3,12 Z" fill="#e6d080" opacity="0.9"/><path d="M10.5,7 C13.5,7 15,9 14.5,11.5 L13.5,14 H11.5 L10.5,11.5 C10,9 10,8 10.5,7 Z" fill="#e0e0e0" stroke="#555" stroke-width="0.6"/><path d="M11.5,14.5 H13.5 V16 H11.5 Z" fill="#666"/><path d="M16.5,15.5 V17.5 H14.5 Z" fill="#111"/></svg>
<div class="a" style="left:0px;top:459.5px;width:900px;height:11.5px;background:#f0f0f0;"></div>
<div class="a" style="left:1px;top:461px;width:7px;height:8px;background:#fafafa;"></div>
<svg class="a" style="left:2px;top:462px" width="5" height="6" viewBox="0 0 5 6"><path d="M1,1.5 L4,4.5 M4,1.5 L1,4.5" stroke="#666" stroke-width="0.6"/></svg>
<svg class="a" style="left:13px;top:462px" width="10" height="8" viewBox="0 0 10 8"><path d="M1,3 L6,1 L9,3 V6 L4,8 L1,6 Z" fill="#5fc3e6" stroke="#333" stroke-width="0.5"/><path d="M2,4 L8,2 M2,6 L8,4" stroke="#222" stroke-width="0.6"/><path d="M6,6 L9,4" stroke="#d02020" stroke-width="0.8"/></svg>
<div class="a" style="left:24.0px;top:462px;width:10.4px;height:8px;background:#c2dcf2;"></div>
<div class="t" style="left:27.6px;top:463.90000000000003px;font-size:5.83px;color:#333;transform:scaleX(0.91);transform-origin:0 0;">0</div>
<div class="a" style="left:35.2px;top:462px;width:10.4px;height:8px;background:#c2dcf2;"></div>
<div class="t" style="left:38.800000000000004px;top:463.90000000000003px;font-size:5.83px;color:#333;transform:scaleX(0.91);transform-origin:0 0;">1</div>
<div class="a" style="left:46.4px;top:462px;width:10.4px;height:8px;background:#c2dcf2;"></div>
<div class="t" style="left:50.0px;top:463.90000000000003px;font-size:5.83px;color:#333;transform:scaleX(0.91);transform-origin:0 0;">2</div>
<div class="a" style="left:57.599999999999994px;top:462px;width:10.4px;height:8px;background:#c2dcf2;"></div>
<div class="t" style="left:61.199999999999996px;top:463.90000000000003px;font-size:5.83px;color:#333;transform:scaleX(0.91);transform-origin:0 0;">3</div>
<div class="a" style="left:68.8px;top:462px;width:10.4px;height:8px;background:#c2dcf2;"></div>
<div class="t" style="left:72.39999999999999px;top:463.90000000000003px;font-size:5.83px;color:#333;transform:scaleX(0.91);transform-origin:0 0;">4</div>
<div class="a" style="left:80.0px;top:462px;width:10.4px;height:8px;background:#c2dcf2;"></div>
<div class="t" style="left:83.6px;top:463.90000000000003px;font-size:5.83px;color:#333;transform:scaleX(0.91);transform-origin:0 0;">5</div>
<div class="a" style="left:0px;top:471.4px;width:900px;height:15.6px;background:#f0f0f0;"></div>
<div class="a" style="left:0px;top:469.8px;width:900px;height:1px;background:#d8d8d8;"></div>
<div class="a" style="left:0px;top:470.8px;width:900px;height:0.8px;background:#fafafa;"></div>
<div class="a" style="left:0px;top:459.6px;width:879px;height:0.8px;background:#f8f8f8;"></div>
<div class="a" style="left:880px;top:458.2px;width:20px;height:0.8px;background:#fafafa;"></div>
<div class="a" style="left:880px;top:459px;width:20px;height:0.9px;background:#d0d0d0;"></div>
<svg class="a" style="left:1px;top:472px" width="12" height="13" viewBox="0 0 12 13"><path d="M4,10 V2 M4,10 L11,10 M4,10 L10,5" stroke="#2a7d9a" stroke-width="0.9" fill="none"/><circle cx="4" cy="10" r="2.5" fill="#d02020"/></svg>
<div class="a" style="left:14px;top:473.5px;width:38px;height:10px;background:#fff;"></div>
<div class="t" style="left:16px;top:476.5px;font-size:5.94px;color:#222;transform:scaleX(0.91);transform-origin:0 0;">Глобальнс</div>
<svg class="a" style="left:45px;top:476px" width="6" height="6" viewBox="0 0 6 6"><path d="M1,2 L3,4 L5,2" stroke="#555" stroke-width="0.5" fill="none"/></svg>
<div class="a" style="left:54px;top:473.5px;width:61px;height:10px;background:#fff;"></div>
<div class="t" style="left:56px;top:476.5px;font-size:5.94px;color:#222;transform:scaleX(0.91);transform-origin:0 0;">0&nbsp;&nbsp;: General</div>
<svg class="a" style="left:108.5px;top:476px" width="6" height="6" viewBox="0 0 6 6"><path d="M1,2 L3,4 L5,2" stroke="#555" stroke-width="0.5" fill="none"/></svg>
<svg class="a" style="left:117px;top:473px" width="11" height="10" viewBox="0 0 11 10"><path d="M1,3 L5,1 L10,3 V8 L6,10 L1,8 Z" fill="#5fc3e6" stroke="#1d5a7a" stroke-width="0.5"/><path d="M1,3 L6,5 L10,3 M6,5 V10" stroke="#1d5a7a" stroke-width="0.5" fill="none"/><path d="M1,3 L6,5 V10 L1,8 Z" fill="#e8c050" opacity="0.7"/></svg>
<svg class="a" style="left:130px;top:473px" width="11" height="10" viewBox="0 0 11 10"><path d="M1,3 L5,1 L10,3 V8 L6,10 L1,8 Z" fill="#5fc3e6" stroke="#1d5a7a" stroke-width="0.5"/><path d="M1,3 L6,5 L10,3 M6,5 V10" stroke="#1d5a7a" stroke-width="0.5" fill="none"/><path d="M1,3 L6,5 V10 L1,8 Z" fill="#e8c050" opacity="0.7"/></svg>
<div class="a" style="left:141.0px;top:472.5px;width:11.5px;height:11px;background:#c2dcf2;"></div><svg class="a" style="left:141.5px;top:473px" width="11" height="10" viewBox="0 0 11 10"><path d="M1,3 L5,1 L10,3 V8 L6,10 L1,8 Z" fill="#5fc3e6" stroke="#1d5a7a" stroke-width="0.5"/><path d="M1,3 L6,5 L10,3 M6,5 V10" stroke="#1d5a7a" stroke-width="0.5" fill="none"/><path d="M1,3 L6,5 V10 L1,8 Z" fill="#e8c050" opacity="0.7"/></svg>
<svg class="a" style="left:154px;top:473px" width="9" height="10" viewBox="0 0 9 10"><rect x="3" y="3.5" width="5.5" height="5.5" fill="#888" stroke="#333" stroke-width="0.5"/><path d="M1,1 L3,3" stroke="#333" stroke-width="0.6"/><rect x="0.5" y="0.5" width="2.5" height="2.5" fill="#aaa"/></svg>
<svg class="a" style="left:168px;top:472.5px" width="12" height="11" viewBox="0 0 12 11"><circle cx="5" cy="5" r="3.5" fill="#f0e050" stroke="#6a6010" stroke-width="0.5"/><path d="M7,4 L10,7 L8,8 Z" fill="#333"/><path d="M10.5,9 V11 H8.5 Z" fill="#111"/></svg>
<svg class="a" style="left:184.4px;top:473px" width="10" height="10" viewBox="0 0 10 10"><rect x="0" y="0" width="10" height="10" fill="#9ab8c0"/><path d="M0,0.6 H10 M0,2.4 H10 M0,4.2 H10 M0,6 H10 M0,7.8 H10 M0,9.5 H10 M0.6,0 V10 M2.4,0 V10 M4.2,0 V10 M6,0 V10 M7.8,0 V10 M9.5,0 V10" stroke="#1a4858" stroke-width="0.75"/></svg>
<div class="a" style="left:200px;top:473.3px;width:18px;height:10.4px;background:#f4f4f4;"></div>
<div class="a" style="left:221.3px;top:473.3px;width:27.4px;height:10.4px;background:#f0f0f0;border:0.6px solid #c4c4c4"></div>
<div class="t" style="left:224.3px;top:476.5px;font-size:5.83px;color:#333;transform:scaleX(0.91);transform-origin:0 0;">539,9</div>
<div class="a" style="left:250px;top:473.3px;width:26.7px;height:10.4px;background:#f0f0f0;border:0.6px solid #c4c4c4"></div>
<div class="t" style="left:253px;top:476.5px;font-size:5.83px;color:#333;transform:scaleX(0.91);transform-origin:0 0;">9835,09</div>
<div class="a" style="left:278.4px;top:473.3px;width:26.3px;height:10.4px;background:#f0f0f0;border:0.6px solid #c4c4c4"></div>
<div class="t" style="left:281.4px;top:476.5px;font-size:5.83px;color:#333;transform:scaleX(0.91);transform-origin:0 0;">0</div>
<svg class="a" style="left:306.7px;top:473px" width="10.5" height="11" viewBox="0 0 10.5 11"><rect x="0" y="0" width="10.5" height="11" fill="#3a7d90"/><path d="M2,2.5 H9 M2,5.5 H9 M2,8.5 H9 M3.5,1 V10" stroke="#c8ecf8" stroke-width="0.7"/></svg>
<svg class="a" style="left:320px;top:473.5px" width="7" height="10" viewBox="0 0 7 10"><rect x="0.5" y="0.5" width="6" height="9" fill="#5fb0d0" stroke="#1d5a7a" stroke-width="0.5"/><rect x="1.5" y="1.5" width="4" height="2" fill="#e8f4f8"/><path d="M1.5,5 H5.5 M1.5,6.5 H5.5 M1.5,8 H5.5" stroke="#1d5a7a" stroke-width="0.5"/></svg>
<svg class="a" style="left:330.7px;top:475px" width="11" height="6" viewBox="0 0 11 6"><rect x="0.5" y="0.5" width="10" height="5" fill="#e8e8e8" stroke="#333" stroke-width="0.6"/><path d="M2,1 V3 M4,1 V4 M6,1 V3 M8,1 V4" stroke="#333" stroke-width="0.5"/></svg>
<svg class="a" style="left:346.7px;top:473px" width="10" height="11" viewBox="0 0 10 11"><path d="M1,1 L5,3 L3,5 Z" fill="#444"/><rect x="2.5" y="4" width="5" height="6" fill="#fff" stroke="#333" stroke-width="0.6"/><path d="M9.5,8.5 V10.5 H7.5 Z" fill="#111"/></svg>
<div class="t" style="left:360px;top:476.3px;font-size:6.05px;color:#222;transform:scaleX(0.91);transform-origin:0 0;">Точ</div>
<div class="a" style="left:370.7px;top:473.3px;width:20px;height:10.4px;background:#fff;"></div>
<div class="t" style="left:372.5px;top:476.5px;font-size:5.94px;color:#222;transform:scaleX(0.91);transform-origin:0 0;">0,01</div>
<div class="a" style="left:396px;top:473.3px;width:75.7px;height:10.4px;background:#fff;"></div>
<div class="t" style="left:398px;top:476.6px;font-size:5.72px;color:#999;transform:scaleX(0.91);transform-origin:0 0;">Ввести команду</div>
<svg class="a" style="left:856.5px;top:473px" width="43" height="12" viewBox="0 0 43 12"><defs><linearGradient id="dl" x1="0" x2="1"><stop offset="0" stop-color="#2a6aa2"/><stop offset="1" stop-color="#64a8d8"/></linearGradient></defs><rect x="0.5" y="1" width="32" height="9.7" fill="url(#dl)"/><text x="2" y="9" font-size="8.2" font-family="Liberation Sans" fill="#eef4f8">Delcam</text><circle cx="37" cy="6" r="5" fill="#3a80b8" stroke="#fff" stroke-width="0.8"/><path d="M34.5,4 H39.5 M37,4 V8.5" stroke="#0d2a40" stroke-width="1"/></svg>
<div class="a" style="left:0px;top:487px;width:900px;height:19px;background:#243744;"></div>
<svg class="a" style="left:7px;top:493px" width="8" height="8" viewBox="0 0 8 8"><path d="M0,1 L3.5,0.5 V3.7 H0 Z M4,0.4 L8,0 V3.7 H4 Z M0,4.3 H3.5 V7.5 L0,7 Z M4,4.3 H8 V8 L4,7.6 Z" fill="#fff"/></svg>
<svg class="a" style="left:30.5px;top:490.5px" width="9" height="11" viewBox="0 0 9 11"><rect x="0.5" y="0.5" width="8" height="10" fill="#a8d0e8" stroke="#5a8aa8" stroke-width="0.5"/><rect x="1.5" y="1.5" width="6" height="3" fill="#e8f4fa"/><path d="M1.5,6 H7.5 M1.5,8 H7.5" stroke="#5a8aa8" stroke-width="0.6"/></svg>
<svg class="a" style="left:53px;top:491px" width="11" height="11" viewBox="0 0 11 11"><circle cx="5.5" cy="5.5" r="5" fill="#fff"/><path d="M3,2.5 L5.5,5.5 L8,2.5 M5.5,5.5 V9" stroke="#e02828" stroke-width="1.3" fill="none"/></svg>
<svg class="a" style="left:75.5px;top:491.5px" width="11.5" height="10" viewBox="0 0 11.5 10"><path d="M0.5,1 H4.5 L5.5,2 H11 V9.5 H0.5 Z" fill="#e8b838"/><rect x="0.5" y="3.5" width="10.5" height="6" fill="#f6d064"/><rect x="3.5" y="6" width="4.5" height="3.5" fill="#3a8ad0"/></svg>
<svg class="a" style="left:99px;top:491px" width="10" height="10" viewBox="0 0 10 10"><path d="M0.5,2 L4.5,9 L9.5,1" stroke="#3a8ad0" stroke-width="2" fill="none"/><path d="M7,0.5 V8" stroke="#c8e0f0" stroke-width="0.8"/></svg>
<div class="a" style="left:115.8px;top:487px;width:22.5px;height:19px;background:#3a4b57;"></div>
<svg class="a" style="left:121.5px;top:491px" width="11" height="11" viewBox="0 0 11 11"><circle cx="5.5" cy="5.5" r="5" fill="#6a5aa8"/><circle cx="4.5" cy="7" r="3" fill="#e8902a"/><path d="M6,1 L7.5,10" stroke="#fff" stroke-width="1"/><circle cx="7" cy="3.3" r="1.5" fill="#3b2f80"/></svg>
<div class="a" style="left:71.7px;top:504.8px;width:18.3px;height:1.2px;background:#7cb8e4;"></div>
<div class="a" style="left:94px;top:504.8px;width:19px;height:1.2px;background:#7cb8e4;"></div>
<div class="a" style="left:116px;top:504.8px;width:22.3px;height:1.2px;background:#7cb8e4;"></div>
<svg class="a" style="left:796px;top:494px" width="7" height="5" viewBox="0 0 7 5"><path d="M1,4 L3.5,1.2 L6,4" stroke="#fff" stroke-width="0.7" fill="none"/></svg>
<svg class="a" style="left:806.5px;top:492.5px" width="8" height="8" viewBox="0 0 8 8"><rect x="1" y="0.5" width="6.5" height="5" fill="none" stroke="#fff" stroke-width="0.7"/><path d="M2.5,7 H6 M0.5,0.5 V6" stroke="#fff" stroke-width="0.7"/></svg>
<svg class="a" style="left:818px;top:493px" width="7" height="7" viewBox="0 0 7 7"><path d="M0.5,2.5 H2 L4,0.5 V6.5 L2,4.5 H0.5 Z" fill="none" stroke="#fff" stroke-width="0.6"/><path d="M4.8,2.3 L6.8,4.3 M6.8,2.3 L4.8,4.3" stroke="#fff" stroke-width="0.5"/></svg>
<div class="t" style="left:830px;top:493.90000000000003px;font-size:5.83px;color:#fff;transform:scaleX(0.91);transform-origin:0 0;">ENG</div>
<div class="t" style="left:853.3px;top:489.5px;font-size:5.83px;color:#fff;transform:scaleX(0.91);transform-origin:0 0;">15:52</div>
<div class="t" style="left:846.5px;top:497.40000000000003px;font-size:5.83px;color:#fff;transform:scaleX(0.91);transform-origin:0 0;">22.06.2022</div>
<svg class="a" style="left:880.5px;top:492.5px" width="8.5" height="8.5" viewBox="0 0 8.5 8.5"><path d="M0.5,0.5 H8 V6 H4.5 L3,7.8 V6 H0.5 Z" fill="#fff"/><path d="M2,2.3 H6.5 M2,3.8 H6.5" stroke="#243744" stroke-width="0.5"/></svg>
<div class="a" style="left:897px;top:487px;width:0.6px;height:19px;background:#5a6a74;"></div>
<svg class="a" style="left:0;top:0" width="900" height="506" viewBox="0 0 900 506">
<defs><clipPath id="cp"><path d="M433.8,83.6 Q435.5,82.8 437.5,84 L536.5,122.3 Q540.6,124 539.6,127.5 L531.3,160 L489,328 C486,338 481,346 480.6,360 L481,400 C482,414 485,424 489,429 L495.5,437 Q497.5,440 494,440.8 L473.6,441.4 L463,439.8 L447.2,435.4 L431.4,430 L417.7,423.6 L405,421.2 L393.6,416.5 L367,407.6 L334.3,394.3 L322.5,389.5 Q321.3,388.5 322,386.5 C323.0,385.0 324.3,381.5 325.7,377.3 C327.1,373.1 329.0,366.6 331.0,361.3 C333.0,356.0 335.0,350.6 337.7,345.3 C340.4,340.0 343.2,334.6 347.0,329.3 C350.8,324.0 356.1,318.6 360.3,313.3 C364.5,308.0 368.7,303.1 372.3,297.3 C375.9,291.5 379.0,284.9 381.7,278.7 C384.4,272.5 386.5,265.3 388.3,260.0 C390.1,254.7 391.6,249.2 392.3,247.0 L414.4,160 Z"/></clipPath>
<linearGradient id="g1" x1="0" y1="0" x2="1" y2="0"><stop offset="0" stop-color="#557e97"/><stop offset="1" stop-color="#4c728a"/></linearGradient>
<linearGradient id="g2" x1="0" y1="0" x2="1" y2="0"><stop offset="0" stop-color="#4a6e86"/><stop offset="0.5" stop-color="#577c94"/><stop offset="1" stop-color="#4d7189"/></linearGradient>
<linearGradient id="g3" x1="0" y1="0" x2="1" y2="0"><stop offset="0" stop-color="#4e7088"/><stop offset="1" stop-color="#4b6c83"/></linearGradient>
<linearGradient id="g4" x1="0" y1="0" x2="1" y2="0"><stop offset="0" stop-color="#4c6c83"/><stop offset="0.6" stop-color="#4a697f"/><stop offset="1" stop-color="#476579"/></linearGradient>
<linearGradient id="fl" x1="441" y1="0" x2="462" y2="0" gradientUnits="userSpaceOnUse"><stop offset="0" stop-color="#4f7791"/><stop offset="0.45" stop-color="#6c9cba"/><stop offset="0.6" stop-color="#6290ad"/><stop offset="1" stop-color="#547e99"/></linearGradient>
<linearGradient id="fh" x1="0" y1="0" x2="1" y2="0"><stop offset="0" stop-color="#6a9aba" stop-opacity="0"/><stop offset="0.6" stop-color="#6e9fbe" stop-opacity="0.7"/><stop offset="1" stop-color="#6a9aba" stop-opacity="0"/></linearGradient>
<linearGradient id="mvg" x1="0" y1="200" x2="0" y2="425" gradientUnits="userSpaceOnUse"><stop offset="0" stop-color="#fff" stop-opacity="0"/><stop offset="0.6" stop-color="#fff" stop-opacity="0.9"/><stop offset="1" stop-color="#fff" stop-opacity="1"/></linearGradient><mask id="mv" maskUnits="userSpaceOnUse" x="0" y="0" width="900" height="506"><rect x="0" y="0" width="900" height="506" fill="url(#mvg)"/></mask>
<radialGradient id="hl" cx="0.5" cy="0.5" r="0.5"><stop offset="0" stop-color="#a8d4ee"/><stop offset="0.5" stop-color="#7fb0cf" stop-opacity="0.6"/><stop offset="1" stop-color="#6a9bbb" stop-opacity="0"/></radialGradient>
<linearGradient id="vh" x1="0" y1="0" x2="1" y2="0"><stop offset="0" stop-color="#5e8eab" stop-opacity="0"/><stop offset="0.5" stop-color="#8fc0dc" stop-opacity="0.8"/><stop offset="1" stop-color="#5e8eab" stop-opacity="0"/></linearGradient>
</defs>
<path d="M433.8,83.6 Q435.5,82.8 437.5,84 L536.5,122.3 Q540.6,124 539.6,127.5 L531.3,160 L489,328 C486,338 481,346 480.6,360 L481,400 C482,414 485,424 489,429 L495.5,437 Q497.5,440 494,440.8 L473.6,441.4 L463,439.8 L447.2,435.4 L431.4,430 L417.7,423.6 L405,421.2 L393.6,416.5 L367,407.6 L334.3,394.3 L322.5,389.5 Q321.3,388.5 322,386.5 C323.0,385.0 324.3,381.5 325.7,377.3 C327.1,373.1 329.0,366.6 331.0,361.3 C333.0,356.0 335.0,350.6 337.7,345.3 C340.4,340.0 343.2,334.6 347.0,329.3 C350.8,324.0 356.1,318.6 360.3,313.3 C364.5,308.0 368.7,303.1 372.3,297.3 C375.9,291.5 379.0,284.9 381.7,278.7 C384.4,272.5 386.5,265.3 388.3,260.0 C390.1,254.7 391.6,249.2 392.3,247.0 L414.4,160 Z" fill="#547c96"/>
<g clip-path="url(#cp)">
<g transform="skewX(-14.036)">
<rect x="340.00" y="60" width="164.20" height="400" fill="#547c96"/>
<rect x="504.20" y="60" width="18.00" height="400" fill="url(#g1)"/>
<rect x="523.50" y="60" width="16.00" height="400" fill="url(#g2)"/>
<rect x="539.50" y="60" width="18.00" height="400" fill="url(#g3)"/>
<rect x="557.50" y="60" width="42.50" height="400" fill="url(#g4)"/>
</g>
<path d="M462.5,352.7 L482,352.7 L480.6,360 L481,400 L484,414 L489,429 L496,438 L478,440 C472,435 467,428 464.8,419.8 C461,405 460,392 459.3,378.5 C459,370 460,362 462.5,352.7 Z" fill="#56819d"/>
<path d="M446.7,349.7 C452,351 457,352 462.5,352.7 C460,362 459,370 459.3,378.5 C460,392 461,405 464.8,419.8 C467,428 472,435 478,440 L446.3,431.7 C443,410 441,395 440.9,378.5 C441,370 444,360 446.7,349.7 Z" fill="url(#fl)"/>
<path d="M432.9,345.8 L446.7,349.7 C444,360 441,370 440.9,378.5 C441,395 443,410 446.3,431.7 L412,421 L420,350 Z" fill="#507891"/>
<ellipse cx="450" cy="392" rx="2.5" ry="17" fill="url(#hl)" opacity="0.55" transform="rotate(-4 450 390)"/>
<ellipse cx="460.4" cy="428.5" rx="7" ry="4" fill="url(#hl)"/>
<ellipse cx="423.5" cy="411" rx="3.5" ry="7" fill="url(#hl)" transform="rotate(28 423.5 411)"/>
<g transform="skewX(-14.036)" mask="url(#mv)"><rect x="505" y="200" width="9" height="225" fill="url(#fh)"/></g>
<path d="M433.8,83.6 L388.3,260 L381.7,278.7 L395,270.7 L442.1,87.8 Z" fill="#000" opacity="0.045"/>
<g stroke="#1c3344" stroke-width="0.75" fill="none">
<path d="M442.1,87.8 L398.5,260 C397.9,261.8 397.8,264.0 395.0,270.7 C392.2,277.4 387.0,291.1 381.7,300.0 C376.4,308.9 368.8,316.4 363.0,324.0 C357.2,331.6 350.8,338.2 347.0,345.3 C343.2,352.4 342.1,359.6 340.3,366.7 C338.5,373.8 337.1,383.6 336.3,388.0 C335.5,392.4 335.6,392.2 335.5,393.0"/>
<path d="M478.5,103.5 L397,417.5"/>
<path d="M496.5,108.2 L412.4,422" stroke-width="0.75"/>
<path d="M497.8,108.7 L413.7,422.5" stroke-width="0.75" stroke-dasharray="1.3 0.7"/>
<path d="M511.5,114 L447,350 C444,360 441,370 440.9,378.5 C441,395 443,410 446.3,431.7"/>
<path d="M527.2,119.5 L484.2,277.8 L463,350 C460,362 459,370 459.3,378.5 C460,392 461,405 464.8,419.8 C467,428 472,435 478,440"/>
<path d="M477.3,110.7 L538.5,129.5"/>
<path d="M432.9,345.8 C438,347.5 442,349 446.7,349.7 C452,351 457,352 462.5,352.7 C470,353 476,352.8 482,352.7"/>
<path d="M426.7,373 C432,375 437,377 440.9,378.5 C448,378 455,377 461.5,376.3 C468,375.5 475,374.5 480,374"/>
<path d="M418,400.2 C424,402 428,403 431,404.6 C437,408 441,411 446.3,414.3 C452,416 458,418 463.7,418.7 C470,418 476,417 483.3,416.5"/>
<path d="M440.9,378.5 C437,388 434,396 431,404.6 C428,412 426,416 424.6,421"/>
</g>
<path d="M351.1,374.1 L373.9,382.8 L367.4,407.3 L345.1,395.9 Z" fill="#5883a0"/>
<path d="M373.9,382.8 C375,383.5 376,384.5 376,386 L372.8,407.8 L378.3,407.8 L380.4,385 C380.8,382.5 379.5,380.8 377.2,379.6 Z" fill="#6a9ab8" opacity="0.5"/>
<g fill="none" stroke="#1c3344" stroke-width="0.7">
<path d="M335.9,392.6 C338,384 339.5,379 341.3,376.3 C344,372 347,369 350,368.7 C352,368.5 354,369.5 357.6,370.9 L377.2,379.6 C379.5,380.8 380.8,382.5 380.4,385 L378.3,407.8"/>
<path d="M340.2,393.7 C342,386 343,383 344.6,380.7 C346.5,377 349,374.5 351.1,374.1 L373.9,382.8 C375,383.5 376,384.5 376,386 L372.8,407.8"/>
<path d="M345.1,395.9 L351.1,374.1 M373.9,382.8 L367.4,407.3"/>
</g>
<ellipse cx="465.7" cy="118.4" rx="10.8" ry="11.6" fill="#4f7590" stroke="#233f52" stroke-width="0.8"/><path d="M460.56,112.02000000000001 A8.424000000000001,9.048 0 0 0 468.66,127.21600000000001" fill="none" stroke="#8cbcd8" stroke-width="1.6" opacity="0.85"/><path d="M459.804,117.24000000000001 A7.56,7.888 0 0 1 472.44,114.34" fill="none" stroke="#1f3748" stroke-width="1.5" opacity="0.75"/><ellipse cx="466.5" cy="118.4" rx="8.424000000000001" ry="8.815999999999999" fill="none" stroke="#2a4658" stroke-width="0.5"/><ellipse cx="466.9" cy="118.7" rx="5.940000000000001" ry="6.032" fill="#55809b" stroke="#2a4658" stroke-width="0.6"/><circle cx="467.3" cy="118.7" r="1.5" fill="#2a4050"/><circle cx="467.4" cy="118.60000000000001" r="0.8" fill="#9ab0c0"/><ellipse cx="390.6" cy="390.8" rx="10.1" ry="11.2" fill="#4f7590" stroke="#233f52" stroke-width="0.8"/><path d="M385.445,384.64 A7.878,8.735999999999999 0 0 0 393.02,399.312" fill="none" stroke="#8cbcd8" stroke-width="1.6" opacity="0.85"/><path d="M384.738,389.68 A7.069999999999999,7.616 0 0 1 396.555,386.88" fill="none" stroke="#1f3748" stroke-width="1.5" opacity="0.75"/><ellipse cx="391" cy="390.8" rx="7.878" ry="8.511999999999999" fill="none" stroke="#2a4658" stroke-width="0.5"/><ellipse cx="391.4" cy="391.1" rx="5.555000000000001" ry="5.824" fill="#55809b" stroke="#2a4658" stroke-width="0.6"/><circle cx="391.8" cy="391.1" r="1.5" fill="#2a4050"/><circle cx="391.9" cy="391.0" r="0.8" fill="#e8f0f5"/><ellipse cx="407.4" cy="263.9" rx="1.8" ry="1.6" fill="#c8d4dc" stroke="#31495a" stroke-width="0.5"/>


</g>
<path d="M322.3,387.8 L334.3,393.6 L367,406.9 L393.6,415.8 L405,420.5 L411,421.2" stroke="#27404f" stroke-width="1.4" fill="none"/><path d="M410,420.3 C420,422.5 432,427.5 445,432 C452,434.5 458,437 464,438 C472,438.6 485,438.5 494.5,438.3 Q496.8,439.5 494,440.8 L473.6,441.4 L463,439.8 L447.2,435.4 L431.4,430 L417.7,423.6 L405,421.2 Z" fill="#6e9dbb"/><path d="M410,420.3 C420,422.5 432,427.5 445,432 C452,434.5 458,437 464,438 C472,438.6 485,438.5 494.5,438.3" stroke="#243c4c" stroke-width="0.7" fill="none"/>
<path d="M433.8,83.8 L537,123" stroke="#2c4a5c" stroke-width="0.8" fill="none"/><path d="M435.5,85.2 L537.5,124.2" stroke="#78abc9" stroke-width="1.1" fill="none"/><path d="M438,87.3 L538.5,126" stroke="#2c4a5c" stroke-width="0.5" fill="none" opacity="0.8"/>
<g stroke="#c4c0bc" stroke-width="0.5" fill="none" opacity="0.85"><path d="M430.5,82 L432.5,81.5 M434,79.5 L437,83 M437,79.5 L434,83 M447.5,80.5 L450.5,80.5 L447.5,84.5 L450.5,84.5"/></g>
</svg>
</body></html>
